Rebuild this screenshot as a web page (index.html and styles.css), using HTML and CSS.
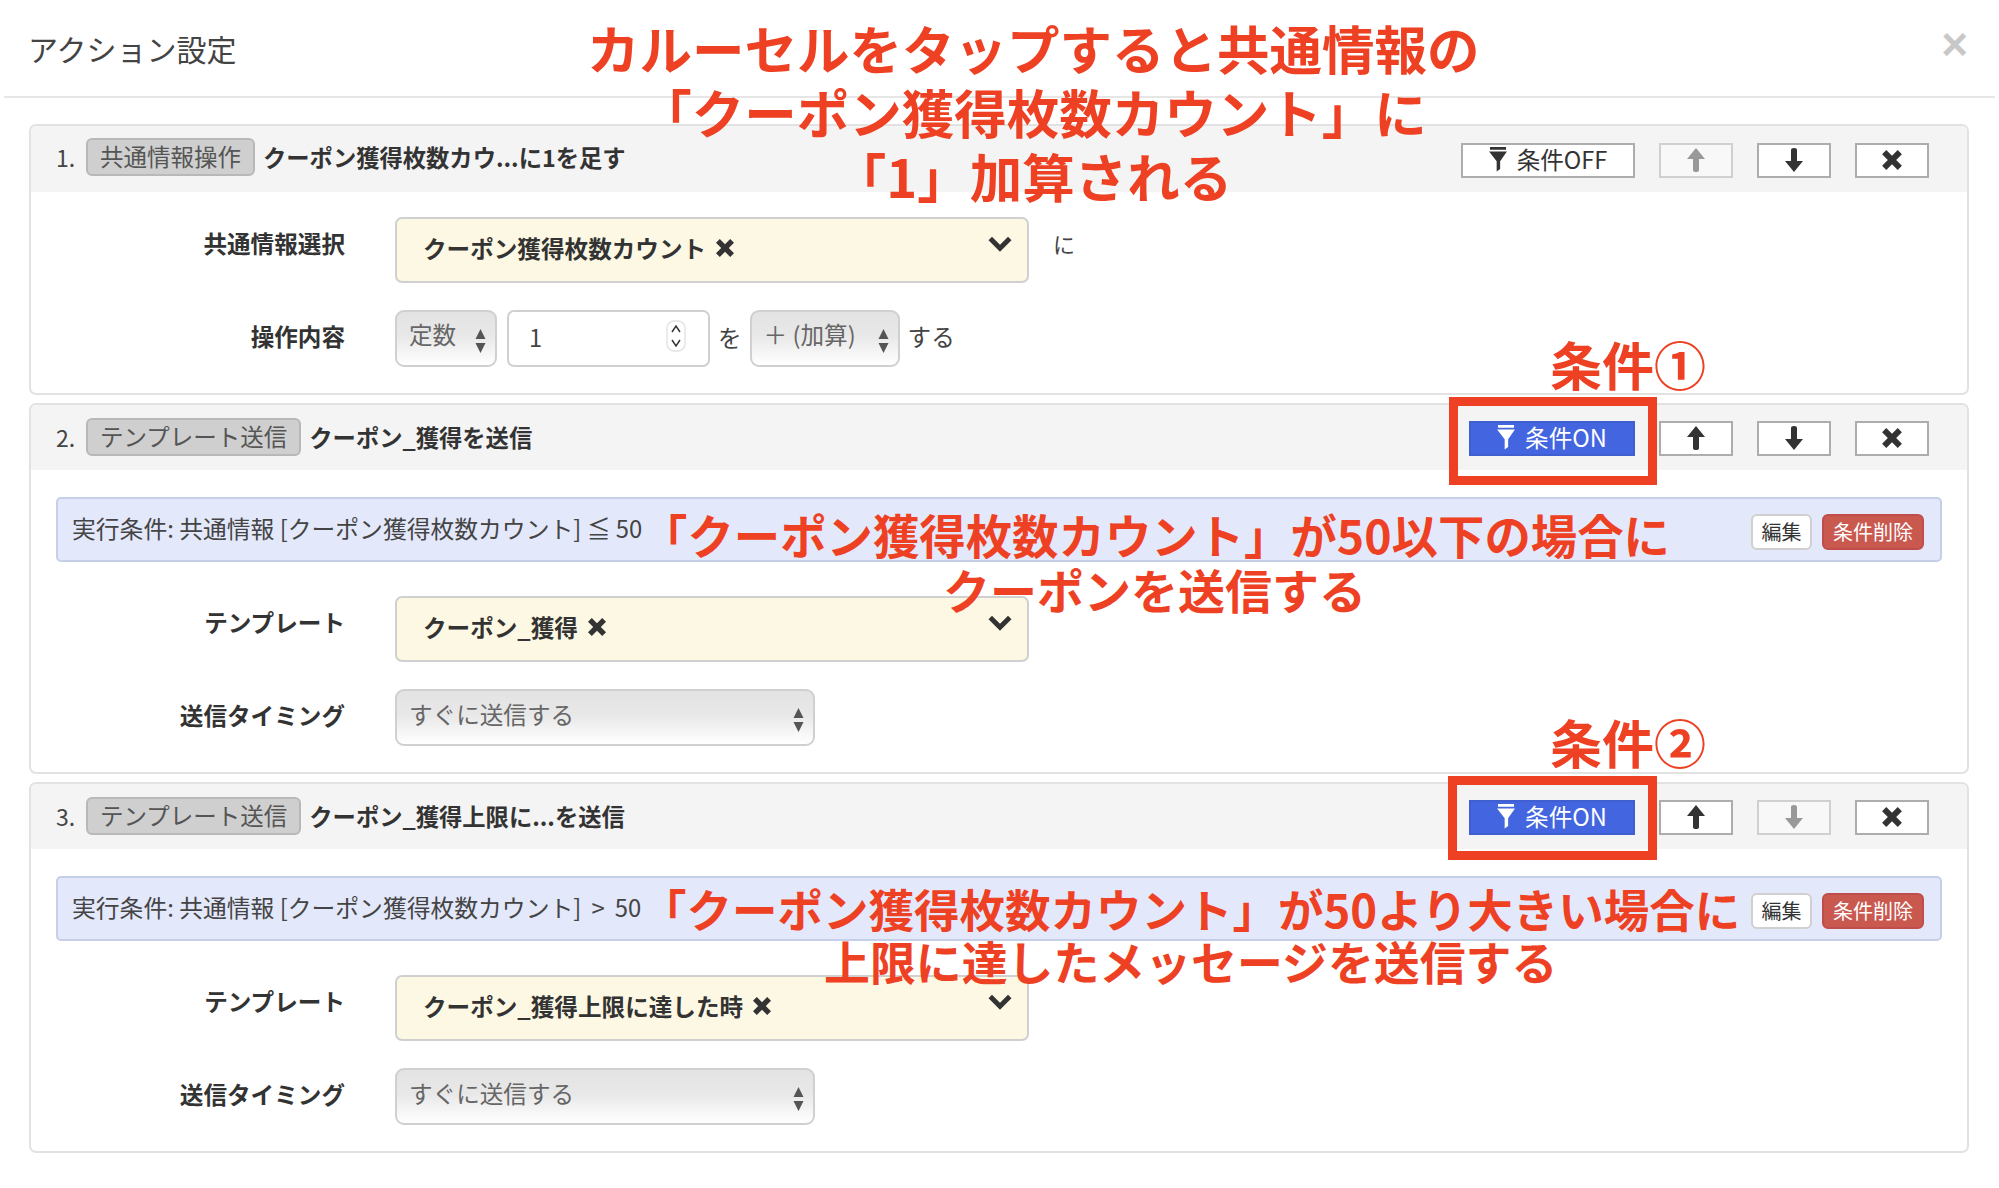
FILE: index.html
```html
<!DOCTYPE html>
<html lang="ja">
<head>
<meta charset="utf-8">
<title>アクション設定</title>
<link rel="stylesheet" href="styles.css">
</head>
<body>
<svg class="defs" width="0" height="0" aria-hidden="true">
  <symbol id="i-filter" viewBox="0 0 20 28"><path d="M1 0h18v3H1zM0 5h20l-7.6 11v8.5L8.5 27.500V16z"/></symbol>
  <symbol id="i-up" viewBox="0 0 20 24"><path d="M10 0l9 11h-6v11q0 2-3 2t-3-2V11H1z"/></symbol>
  <symbol id="i-down" viewBox="0 0 20 24"><path d="M10 24l9-11h-6V2q0-2-3-2T7 2v11H1z"/></symbol>
  <symbol id="i-x" viewBox="0 0 20 20"><path d="M4.800 1L10 6.200 15.200 1 19 4.800 13.800 10 19 15.200 15.200 19 10 13.800 4.800 19 1 15.200 6.200 10 1 4.800z"/></symbol>
  <symbol id="i-chev" viewBox="0 0 24 16"><path d="M3 3l9 9 9-9" fill="none" stroke="currentColor" stroke-width="4.500"/></symbol>
  <symbol id="i-updown" viewBox="0 0 10 26"><path d="M5 1l5 10H0zM5 25l5-10H0z"/></symbol>
  <symbol id="i-spin" viewBox="0 0 20 32"><rect x="1" y="1" width="18" height="30" rx="7" fill="#fff" stroke="#e4e4e4" stroke-width="1.500"/><path d="M6 12l4-6 4 6M6 20l4 6 4-6" fill="none" stroke="#333" stroke-width="1.500"/></symbol>
</svg>
<main class="page">
  <header class="modal-head">
    <h1 class="modal-title">アクション設定</h1>
    <span class="modal-close">×</span>
  </header>

  <div class="cards">
    <section class="card">
      <div class="card-head">
        <span class="num">1.</span><span class="tag">共通情報操作</span><strong class="card-title">クーポン獲得枚数カウ...に1を足す</strong>
        <div class="tools">
          <span class="btn btn-cond"><svg class="ic-filter"><use href="#i-filter"/></svg>条件OFF</span>
          <span class="btn btn-icon btn-off"><svg class="ic-arrow"><use href="#i-up"/></svg></span>
          <span class="btn btn-icon"><svg class="ic-arrow"><use href="#i-down"/></svg></span>
          <span class="btn btn-icon"><svg class="ic-x"><use href="#i-x"/></svg></span>
        </div>
      </div>
      <div class="card-body">
        <div class="row">
          <label class="row-label">共通情報選択</label>
          <div class="chosen"><b>クーポン獲得枚数カウント</b><svg class="ic-x-small"><use href="#i-x"/></svg><svg class="ic-chev"><use href="#i-chev"/></svg></div>
          <span class="suffix suffix-ni">に</span>
        </div>
        <div class="row">
          <label class="row-label">操作内容</label>
          <div class="pick pick-const"><span>定数</span><svg class="ic-updown"><use href="#i-updown"/></svg></div>
          <div class="number"><span>1</span><svg class="ic-spin"><use href="#i-spin"/></svg></div>
          <span class="suffix suffix-wo">を</span>
          <div class="pick pick-op"><span>＋ (加算)</span><svg class="ic-updown"><use href="#i-updown"/></svg></div>
          <span class="suffix suffix-suru">する</span>
        </div>
      </div>
    </section>

    <section class="card">
      <div class="card-head">
        <span class="num">2.</span><span class="tag">テンプレート送信</span><strong class="card-title">クーポン_獲得を送信</strong>
        <div class="tools">
          <span class="btn btn-cond btn-on"><svg class="ic-filter"><use href="#i-filter"/></svg>条件ON</span>
          <span class="btn btn-icon"><svg class="ic-arrow"><use href="#i-up"/></svg></span>
          <span class="btn btn-icon"><svg class="ic-arrow"><use href="#i-down"/></svg></span>
          <span class="btn btn-icon"><svg class="ic-x"><use href="#i-x"/></svg></span>
        </div>
      </div>
      <div class="card-body">
        <div class="cond">
          <span class="cond-text">実行条件: 共通情報 [クーポン獲得枚数カウント] ≦ 50</span>
          <span class="mini">編集</span><span class="mini mini-del">条件削除</span>
        </div>
        <div class="row">
          <label class="row-label">テンプレート</label>
          <div class="chosen"><b>クーポン_獲得</b><svg class="ic-x-small"><use href="#i-x"/></svg><svg class="ic-chev"><use href="#i-chev"/></svg></div>
        </div>
        <div class="row">
          <label class="row-label">送信タイミング</label>
          <div class="pick pick-wide"><span>すぐに送信する</span><svg class="ic-updown"><use href="#i-updown"/></svg></div>
        </div>
      </div>
    </section>

    <section class="card">
      <div class="card-head">
        <span class="num">3.</span><span class="tag">テンプレート送信</span><strong class="card-title">クーポン_獲得上限に...を送信</strong>
        <div class="tools">
          <span class="btn btn-cond btn-on"><svg class="ic-filter"><use href="#i-filter"/></svg>条件ON</span>
          <span class="btn btn-icon"><svg class="ic-arrow"><use href="#i-up"/></svg></span>
          <span class="btn btn-icon btn-off"><svg class="ic-arrow"><use href="#i-down"/></svg></span>
          <span class="btn btn-icon"><svg class="ic-x"><use href="#i-x"/></svg></span>
        </div>
      </div>
      <div class="card-body">
        <div class="cond">
          <span class="cond-text">実行条件: 共通情報 [クーポン獲得枚数カウント]&thinsp; &gt; &thinsp;50</span>
          <span class="mini">編集</span><span class="mini mini-del">条件削除</span>
        </div>
        <div class="row">
          <label class="row-label">テンプレート</label>
          <div class="chosen"><b>クーポン_獲得上限に達した時</b><svg class="ic-x-small"><use href="#i-x"/></svg><svg class="ic-chev"><use href="#i-chev"/></svg></div>
        </div>
        <div class="row">
          <label class="row-label">送信タイミング</label>
          <div class="pick pick-wide"><span>すぐに送信する</span><svg class="ic-updown"><use href="#i-updown"/></svg></div>
        </div>
      </div>
    </section>
  </div>

  <div class="note note-a">カルーセルをタップすると共通情報の<br>「クーポン獲得枚数カウント」に<br>「1」加算される</div>
  <div class="note note-c1">条件①</div>
  <div class="redbox redbox-1"></div>
  <div class="note note-b">「クーポン獲得枚数カウント」が50以下の場合に</div>
  <div class="note note-b2">クーポンを送信する</div>
  <div class="note note-c2">条件②</div>
  <div class="redbox redbox-2"></div>
  <div class="note note-d">「クーポン獲得枚数カウント」が50より大きい場合に</div>
  <div class="note note-d2">上限に達したメッセージを送信する</div>
</main>
</body>
</html>
```

FILE: styles.css
```css
* { box-sizing: border-box; }
html, body { margin: 0; padding: 0; background: #fff; }
body {
  font-family: "Noto Sans CJK JP", "Noto Sans", sans-serif;
  font-size: 23.600px;
  color: #333;
  overflow: hidden;
}
.defs { position: absolute; }
.page { position: relative; width: 1999px; height: 1188px; overflow: hidden; }

.modal-head {
  display: flex;
  justify-content: space-between;
  align-items: center;
  height: 98px;
  margin: 0 4px;
  padding: 0 24px;
  border-bottom: 2px solid #e6e6e6;
}
.modal-title { margin: 0; font-size: 30px; font-weight: 400; color: #444; line-height: 1; }
.modal-close { font-family: "Liberation Sans", sans-serif; font-size: 46px; font-weight: 700; color: #c8c8c8; line-height: 1; margin: -8px 3px 0 0; }

.cards { display: flex; flex-direction: column; gap: 8px; margin: 26px 30px 0 29px; }
.card { border: 2px solid #e2e2e2; border-radius: 7px; background: #fff; }

.card-head {
  display: flex;
  align-items: center;
  height: 66px;
  padding: 0 38px 4px 25px;
  background: #f4f4f4;
  border-radius: 5px 5px 0 0;
}
.card + .card .card-head { height: 65px; padding-bottom: 2px; }
.card + .card .tools { padding-top: 4px; }
.num { width: 30px; color: #444; font-size: 23px; }
.tag {
  display: flex;
  align-items: center;
  height: 38px;
  padding: 0 12px;
  margin-right: 8px;
  background: #cfcfcf;
  border: 2px solid #b8b8b8;
  border-radius: 6px;
  color: #555;
  font-size: 23.500px;
  line-height: 1;
}
.card-title { font-size: 23.300px; font-weight: 700; color: #333; white-space: nowrap; }

.tools { display: flex; gap: 24px; margin-left: auto; padding-top: 7px; }
.btn {
  display: flex;
  align-items: center;
  justify-content: center;
  height: 35px;
  padding-bottom: 2px;
  background: #fff;
  border: 2px solid #adadad;
  color: #333;
  line-height: 1;
}
.btn-cond { width: 174px; gap: 10px; }
.btn-on { width: 166px; margin-left: 8px; background: #4366e0; border-color: #3f5fd0; color: #fff; }
.btn-icon { width: 74px; }
.btn-off { background: #f8f8f8; border-color: #d0d0d0; color: #999; }
.ic-filter { width: 18px; height: 25px; fill: currentColor; }
.ic-arrow { width: 20px; height: 24px; fill: currentColor; }
.ic-x { width: 22px; height: 22px; fill: currentColor; }

.card-body { display: flex; flex-direction: column; gap: 27px; padding: 25px 25px 26px; }
.card-body .cond + .row { margin-top: 7px; }
.card-body:has(.cond) { padding-top: 27px; }

.row { display: flex; align-items: center; gap: 10px; }
.row-label {
  align-self: flex-start;
  width: 289px;
  margin-right: 40px;
  padding-top: 8px;
  text-align: right;
  font-weight: 700;
  line-height: 36px;
}
.chosen {
  position: relative;
  display: flex;
  align-items: center;
  gap: 9px;
  width: 634px;
  height: 66px;
  padding: 0 26px 4px;
  background: #fdf8e3;
  border: 2px solid #d0d0d0;
  border-radius: 7px;
}
.chosen b { font-weight: 700; }
.ic-x-small { width: 20px; height: 20px; fill: #333; }
.ic-chev { position: absolute; right: 14px; top: 16px; width: 26px; height: 18px; color: #333; }
.pick {
  display: flex;
  align-items: flex-start;
  justify-content: space-between;
  height: 57px;
  padding: 7px 9px 0 12px;
  background: linear-gradient(#e3e3e3 0, #e8e8e8 45%, #fff 100%);
  border: 2px solid #d0d0d0;
  border-radius: 9px;
  color: #666;
  line-height: 30px;
}
.pick-const { width: 102px; }
.pick-op { width: 150px; }
.pick-wide { width: 420px; padding-top: 8px; }
.ic-updown { width: 11px; height: 26px; margin-top: 9px; fill: #555; }
.pick-wide .ic-updown { margin-top: 8px; }
.number {
  display: flex;
  justify-content: space-between;
  width: 203px;
  height: 57px;
  padding: 8px 22px 0 20px;
  background: #fff;
  border: 2px solid #d0d0d0;
  border-radius: 7px;
  color: #444;
  line-height: 34px;
}
.ic-spin { width: 20px; height: 32px; }
.suffix { color: #444; padding-bottom: 4px; }
.suffix-ni { align-self: flex-start; margin: 8px 0 0 14px; font-size: 22px; line-height: 36px; }
.suffix-wo { margin: 0 -2px; }
.suffix-suru { margin-left: -2px; padding-bottom: 6px; }

.cond {
  display: flex;
  align-items: center;
  height: 65px;
  padding: 0 16px 0 14px;
  background: #e3e8fb;
  border: 2px solid #c6cfe8;
  border-radius: 5px;
}
.cond-text { margin-right: auto; padding-bottom: 5px; font-size: 23.800px; color: #444; white-space: nowrap; }
.mini {
  display: flex;
  align-items: center;
  justify-content: center;
  width: 61px;
  height: 36px;
  margin-top: 4px;
  background: #fff;
  border: 2px solid #d0d0d0;
  border-radius: 6px;
  font-size: 20px;
  line-height: 1;
}
.mini-del {
  width: 102px;
  margin-left: 10px;
  background: #c9584f;
  border-color: #c04d4b;
  color: #fff;
}

/* annotations laid over the screenshot */
.note {
  position: absolute;
  font-weight: 700;
  color: #ee4124;
  font-size: 46.400px;
  line-height: 1;
  white-space: nowrap;
  text-align: center;
}
.note-a { left: 587px; top: 15px; width: 892px; font-size: 52.500px; line-height: 64px; }
.note-c1 { left: 1550px; top: 338px; font-size: 52px; }
.note-c2 { left: 1550px; top: 716px; font-size: 52px; }
.note-b { left: 641px; top: 511px; }
.note-b2 { left: 943px; top: 565px; font-size: 47px; }
.note-d { left: 641px; top: 886px; font-size: 45.500px; }
.note-d2 { left: 824px; top: 938px; font-size: 45.900px; }
.redbox { position: absolute; border: 9px solid #ee4124; }
.redbox-1 { left: 1449px; top: 397px; width: 208px; height: 88px; }
.redbox-2 { left: 1448px; top: 776px; width: 209px; height: 84px; }
```
